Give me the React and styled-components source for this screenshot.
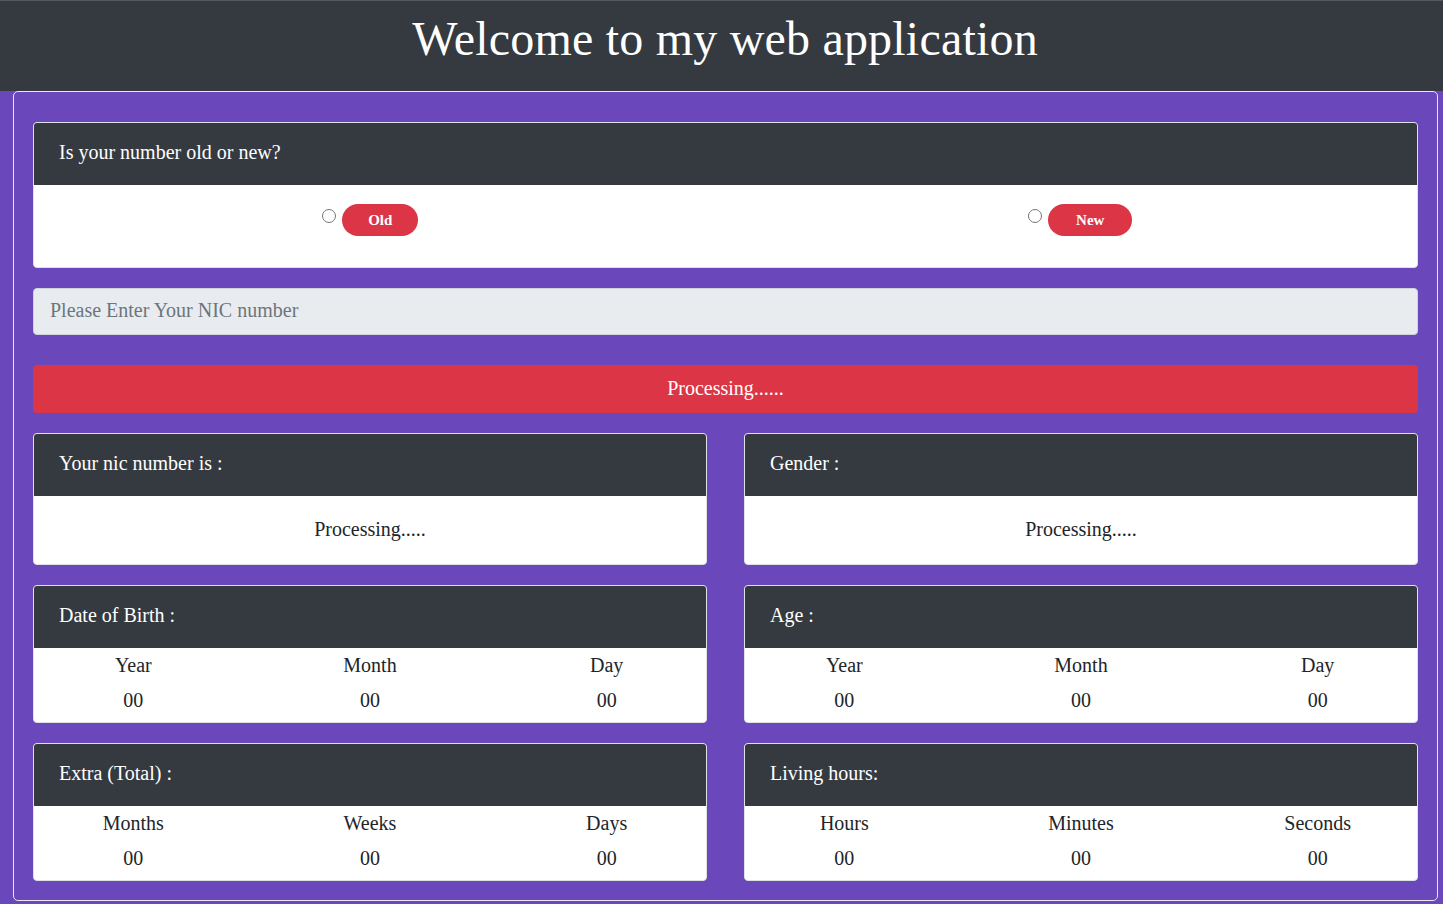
import styled, { createGlobalStyle } from 'styled-components';

const GlobalStyle = createGlobalStyle`
  body {
    margin: 0;
    background-color: #343a40;
    font-family: "Liberation Serif", "Times New Roman", serif;
  }
`;

const Header = styled.header`
  height: 90px;
  border-top: 1px solid #55595e;
  background-color: #343a40;
  display: flex;
  justify-content: center;
  align-items: flex-start;
  padding-left: 7px;
`;

const Title = styled.h1`
  margin: 10px 0 0;
  font-size: 48px;
  font-weight: 400;
  color: #fff;
  letter-spacing: 0.2px;
`;

const Wrapper = styled.main`
  background-color: #6a47bb;
  padding: 0 5px 3px 13px;
`;

const Panel = styled.div`
  border: 1px solid #e9e6f2;
  border-radius: 5px;
  padding: 30px 19px 19px 19px;
  display: flex;
  flex-direction: column;
`;

const Card = styled.div`
  background-color: #fff;
  border: 1px solid #dee2e6;
  border-radius: 4px;
  overflow: hidden;
`;

const CardHeader = styled.div`
  height: 62px;
  box-sizing: border-box;
  background-color: #343a40;
  color: #fff;
  font-size: 20px;
  padding: 0 25px 3px;
  display: flex;
  align-items: center;
`;

const ChoiceBody = styled.div`
  height: 82px;
  display: grid;
  grid-template-columns: 1fr 1fr;
`;

const Choice = styled.label`
  display: flex;
  justify-content: center;
  align-items: flex-start;
  padding-top: 19px;
  padding-left: ${(p) => p.$left || 0}px;
  padding-right: ${(p) => p.$right || 0}px;
`;

const Radio = styled.input`
  margin: 5px 6px 0 0;
  width: 14px;
  height: 14px;
`;

const Pill = styled.span`
  background-color: #dc3545;
  color: #fff;
  font-weight: 700;
  font-size: 15px;
  height: 32px;
  padding: 0 ${(p) => p.$pad || 27}px;
  border-radius: 16px;
  display: flex;
  align-items: center;
`;

const NicInput = styled.input`
  margin-top: 20px;
  height: 47px;
  box-sizing: border-box;
  background-color: #e9ecef;
  border: 1px solid #ced4da;
  border-radius: 4px;
  padding: 0 16px 2px;
  font-family: inherit;
  font-size: 20px;
  color: #495057;
  &::placeholder {
    color: #6c757d;
  }
`;

const ProcessBar = styled.div`
  margin-top: 30px;
  height: 48px;
  box-sizing: border-box;
  padding-bottom: 2px;
  background-color: #dc3545;
  border-radius: 4px;
  color: #fff;
  font-size: 20px;
  display: flex;
  justify-content: center;
  align-items: center;
`;

const Grid = styled.div`
  margin-top: 20px;
  display: grid;
  grid-template-columns: 1fr 1fr;
  column-gap: 37px;
  row-gap: 20px;
`;

const StatusBody = styled.div`
  height: 68px;
  box-sizing: border-box;
  padding-bottom: 2px;
  display: flex;
  justify-content: center;
  align-items: center;
  font-size: 20px;
  color: #212529;
`;

const Triple = styled.div`
  display: grid;
  grid-template-columns: repeat(3, 1fr);
  margin: 0 -19px;
  padding: 6px 0 11px;
  row-gap: 13px;
  font-size: 20px;
  color: #212529;
  text-align: center;
`;

const Cell = styled.div`
  line-height: 22px;
`;

const InfoCard = ({ title, labels }) => (
  <Card>
    <CardHeader>{title}</CardHeader>
    <Triple>
      {labels.map((l) => (
        <Cell key={l}>{l}</Cell>
      ))}
      {labels.map((l) => (
        <Cell key={l + '-v'}>00</Cell>
      ))}
    </Triple>
  </Card>
);

const App = () => {
  return (
    <>
      <GlobalStyle />
      <Header>
        <Title>Welcome to my web application</Title>
      </Header>
      <Wrapper>
        <Panel>
          <Card>
            <CardHeader>Is your number old or new?</CardHeader>
            <ChoiceBody>
              <Choice $right={19}>
                <Radio type="radio" name="type" />
                <Pill $pad={26}>Old</Pill>
              </Choice>
              <Choice $left={18}>
                <Radio type="radio" name="type" />
                <Pill $pad={28}>New</Pill>
              </Choice>
            </ChoiceBody>
          </Card>
          <NicInput placeholder="Please Enter Your NIC number" />
          <ProcessBar>Processing......</ProcessBar>
          <Grid>
            <Card>
              <CardHeader>Your nic number is :</CardHeader>
              <StatusBody>Processing.....</StatusBody>
            </Card>
            <Card>
              <CardHeader>Gender :</CardHeader>
              <StatusBody>Processing.....</StatusBody>
            </Card>
            <InfoCard title="Date of Birth :" labels={['Year', 'Month', 'Day']} />
            <InfoCard title="Age :" labels={['Year', 'Month', 'Day']} />
            <InfoCard title="Extra (Total) :" labels={['Months', 'Weeks', 'Days']} />
            <InfoCard title="Living hours:" labels={['Hours', 'Minutes', 'Seconds']} />
          </Grid>
        </Panel>
      </Wrapper>
    </>
  );
};

export default App;
